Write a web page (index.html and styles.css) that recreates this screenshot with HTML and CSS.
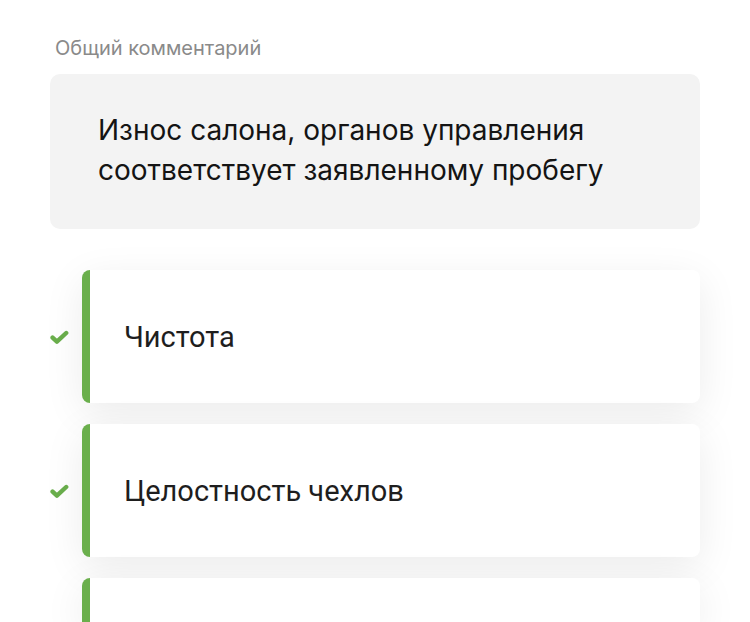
FILE: index.html
```html
<!DOCTYPE html>
<html lang="ru">
<head>
<meta charset="utf-8">
<link rel="stylesheet" href="styles.css">
</head>
<body>
<div class="page">
  <div class="label">Общий комментарий</div>
  <div class="comment">Износ салона, органов управления соответствует заявленному пробегу</div>
  <div class="list">
    <div class="row">
      <div class="mark"><svg width="19" height="15" viewBox="0 0 19 15"><path d="M2.6 7.6 L6.9 11.6 L16.2 3" fill="none" stroke="#6aaf4c" stroke-width="4.4" stroke-linecap="round" stroke-linejoin="round"/></svg></div>
      <div class="card">Чистота</div>
    </div>
    <div class="row">
      <div class="mark"><svg width="19" height="15" viewBox="0 0 19 15"><path d="M2.6 7.6 L6.9 11.6 L16.2 3" fill="none" stroke="#6aaf4c" stroke-width="4.4" stroke-linecap="round" stroke-linejoin="round"/></svg></div>
      <div class="card">Целостность чехлов</div>
    </div>
    <div class="row">
      <div class="mark"></div>
      <div class="card short"></div>
    </div>
  </div>
</div>
</body>
</html>
```
FILE: styles.css
```css
html, body {
  margin: 0;
  padding: 0;
  background: #fff;
}
body {
  height: 622px;
  overflow: hidden;
}
.page {
  width: 650px;
  padding: 36px 0 0 50px;
}
.label {
  font-family: "Inter", "Roboto", sans-serif;
  font-size: 20px;
  line-height: 24px;
  color: #8a8a8a;
  padding-left: 5px;
  margin-bottom: 14px;
}
.comment {
  background: #f3f3f3;
  border-radius: 10px;
  padding: 36px 40px 39px 48px;
  font-family: "Inter", "Roboto", sans-serif;
  font-size: 28px;
  line-height: 40px;
  color: #141414;
}
.list {
  margin-top: 41px;
  display: flex;
  flex-direction: column;
  gap: 21px;
}
.row {
  display: flex;
  align-items: stretch;
}
.mark {
  width: 32px;
  flex: none;
  display: flex;
  align-items: center;
  padding-top: 1px;
}
.card {
  flex: 1;
  height: 133px;
  box-sizing: border-box;
  background: #fff;
  border-left: 8px solid #6aaf4c;
  border-radius: 8px;
  box-shadow: 0 10px 40px rgba(0, 0, 0, 0.08);
  display: flex;
  align-items: center;
  padding-left: 34px;
  font-family: "Roboto", "Inter", sans-serif;
  font-size: 29px;
  color: #1e1e1e;
}
.card.short {
  height: 44px;
  border-bottom-left-radius: 0;
  border-bottom-right-radius: 0;
}
```
